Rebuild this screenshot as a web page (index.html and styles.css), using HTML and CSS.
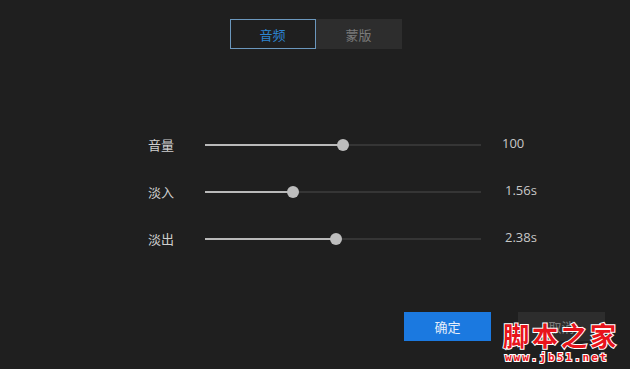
FILE: index.html
```html
<!DOCTYPE html>
<html lang="zh-CN">
<head>
  <meta charset="UTF-8">
  <meta name="viewport" content="width=device-width, initial-scale=1.0">
  <title>音频设置</title>
  <link rel="stylesheet" href="styles.css">
</head>
<body>
  <div class="panel">
    <div class="tabs">
      <div class="tab active">音频</div>
      <div class="tab">蒙版</div>
    </div>

    <div class="sliders">
      <div class="row">
        <span class="label">音量</span>
        <div class="track"><div class="fill" style="width: 138px"></div><div class="thumb" style="left: 138px"></div></div>
        <span class="value">100</span>
      </div>
      <div class="row">
        <span class="label">淡入</span>
        <div class="track"><div class="fill" style="width: 88px"></div><div class="thumb" style="left: 88px"></div></div>
        <span class="value shift">1.56s</span>
      </div>
      <div class="row">
        <span class="label">淡出</span>
        <div class="track"><div class="fill" style="width: 131px"></div><div class="thumb" style="left: 131px"></div></div>
        <span class="value shift">2.38s</span>
      </div>
    </div>

    <div class="actions">
      <button class="btn primary">确定</button>
      <button class="btn">取消</button>
    </div>
  </div>

  <div class="watermark">
    <div class="wm-title">脚本之家</div>
    <div class="wm-url">www.jb51.net</div>
  </div>
</body>
</html>
```

FILE: styles.css
```css
html, body { margin: 0; height: 100%; }
body { background: #1f1f1f; font-family: "Noto Sans CJK SC", "Liberation Sans", sans-serif; font-size: 13px; color: #c4c4c4; overflow: hidden; }
.panel { height: 369px; display: flex; flex-direction: column; }

.tabs { display: flex; justify-content: center; margin-top: 19px; margin-left: 1px; }
.tab { width: 86px; height: 30px; box-sizing: border-box; display: flex; align-items: center; justify-content: center; background: #2d2d2d; color: #7a7a7a; }
.tab.active { background: #1f1f1f; border: 1px solid #6b97bd; color: #2d86d2; }

.sliders { display: flex; flex-direction: column; gap: 35px; margin-top: 90px; padding-left: 148px; }
.row { display: flex; align-items: center; height: 12px; }
.label { width: 57px; color: #cfcfcf; line-height: 12px; }
.track { position: relative; width: 276px; height: 2px; background: #353535; }
.fill { height: 2px; background: #b9b9b9; }
.thumb { position: absolute; top: -5px; width: 12px; height: 12px; margin-left: -6px; border-radius: 50%; background: #bdbdbd; }
.value { margin-left: 21px; color: #c8c8c8; line-height: 12px; font-family: "Open Sans", "Liberation Sans", sans-serif; margin-top: -4px; }
.value.shift { margin-left: 24px; }

.actions { display: flex; gap: 27px; margin-top: 67px; padding-left: 404px; }
.btn { width: 87px; height: 29px; border: none; padding: 0; font-family: inherit; font-size: 13px; background: #2d2d2d; color: #7d7d7d; }
.btn.primary { background: #1b79e0; color: #e6eefa; }

.watermark { position: absolute; left: 503px; top: 318px; width: 124px; }
.wm-title { font-family: "Noto Sans CJK SC", sans-serif; font-weight: 700; font-size: 26px; line-height: 33px; letter-spacing: 3px; color: #e8141b; -webkit-text-stroke: 2px #ffffff; paint-order: stroke fill; white-space: nowrap; }
.wm-url { font-family: "DejaVu Sans Mono", monospace; font-weight: 700; font-size: 11px; line-height: 11px; letter-spacing: 2px; color: #e8141b; -webkit-text-stroke: 2px #ffffff; paint-order: stroke fill; white-space: nowrap; margin-top: 1px; padding-left: 2px; }
```
